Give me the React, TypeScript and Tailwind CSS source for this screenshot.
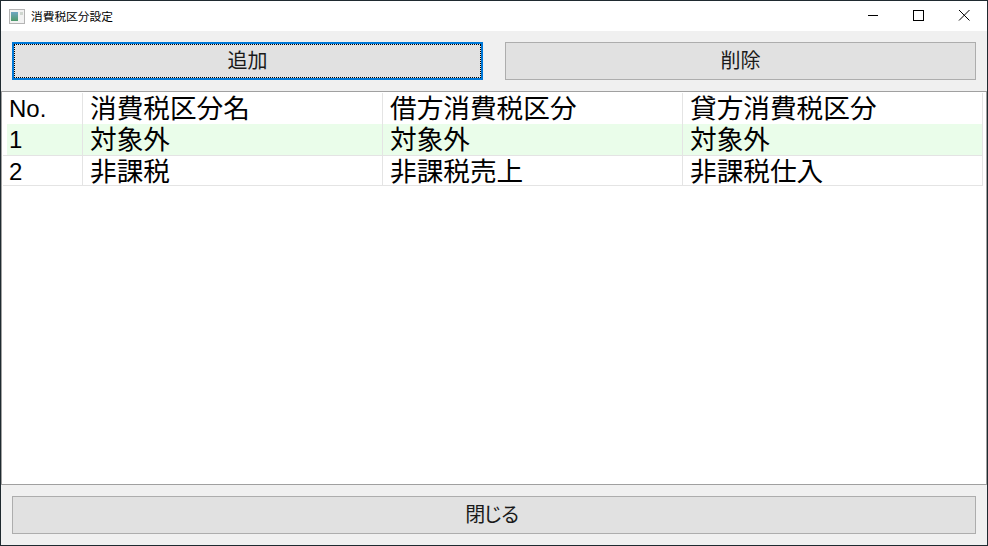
const font = { fontFamily: '"Noto Sans CJK JP", "Liberation Sans", sans-serif' };

const rows = [
  { no: "1", name: "対象外", debit: "対象外", credit: "対象外", h: "h-[32px]" },
  { no: "2", name: "非課税", debit: "非課税売上", credit: "非課税仕入", h: "h-[30px]" },
];

function NoCell({ children }: { children: React.ReactNode }) {
  return (
    <div className="h-full w-[76px] border-r border-[#e4e4e4] pl-[2px] font-['Liberation_Sans'] text-[24px] leading-[31px] whitespace-nowrap">
      {children}
    </div>
  );
}

function Cell({ children }: { children: React.ReactNode }) {
  return (
    <div className="h-full w-[300px] border-r border-[#e4e4e4] pl-[7px] text-[26.67px] leading-[27px] whitespace-nowrap">
      {children}
    </div>
  );
}

function Btn({ label, focused, className }: { label: string; focused?: boolean; className?: string }) {
  if (focused) {
    return (
      <div className={`flex border-2 border-[#0078d7] ${className}`}>
        <div className="flex flex-1 items-center justify-center border border-dotted border-black bg-[#e1e1e1] pb-[3px] text-[20px] text-[#1a1a1a]">{label}</div>
      </div>
    );
  }
  return (
    <div className={`flex items-center justify-center border border-[#adadad] bg-[#e1e1e1] pb-[3px] text-[20px] text-[#1a1a1a] ${className}`}>{label}</div>
  );
}

export default function App() {
  return (
    <div className="flex h-[546px] w-[988px] flex-col overflow-hidden border border-[#1f2a30] bg-white" style={font}>
      <div className="flex h-[30px] shrink-0 items-center bg-white">
        <svg width="16" height="15" viewBox="0 0 16 15" className="ml-[8px]">
          <defs>
            <linearGradient id="ico" x1="0" y1="0" x2="0" y2="1">
              <stop offset="0" stopColor="#6fa6c4" />
              <stop offset="1" stopColor="#4f9a6a" />
            </linearGradient>
          </defs>
          <rect x="0.5" y="0.5" width="15" height="14" fill="#f2f2f2" stroke="#b4b4b4" />
          <rect x="2" y="3" width="7" height="9" fill="url(#ico)" />
          <rect x="11" y="3" width="3" height="3" fill="#cfd6cf" />
        </svg>
        <span className="ml-[6px] text-[11.7px] text-black">消費税区分設定</span>
        <div className="ml-auto flex h-full items-center">
          <svg width="46" height="30" viewBox="0 0 46 30"><path d="M18 14.5h10" stroke="#000" /></svg>
          <svg width="46" height="30" viewBox="0 0 46 30"><rect x="17.5" y="9.5" width="10" height="10" fill="none" stroke="#000" /></svg>
          <svg width="45" height="30" viewBox="0 0 45 30"><path d="M17 9l10.5 10.5M27.5 9l-10.5 10.5" stroke="#000" fill="none" /></svg>
        </div>
      </div>
      <div className="flex h-[60px] shrink-0 items-center gap-[22px] bg-[#f0f0f0] px-[11px]">
        <Btn label="追加" focused className="h-[38px] w-[471px]" />
        <Btn label="削除" className="h-[38px] w-[471px]" />
      </div>
      <div className="flex-1 border border-[#a0a0a0] bg-white pt-[1px] text-black">
        <div className="flex h-[31px] w-[981px] pl-[5px]">
          <NoCell>No.</NoCell>
          <Cell>消費税区分名</Cell>
          <Cell>借方消費税区分</Cell>
          <Cell>貸方消費税区分</Cell>
        </div>
        {rows.map((r, i) => (
          <div key={r.no} className={`ml-[1px] w-[980px] border-b border-[#e4e4e4] pl-[4px] ${r.h}`}>
            <div className={`flex h-full ${i === 0 ? "bg-[#eafdea]" : ""}`}>
              <NoCell>{r.no}</NoCell>
              <Cell>{r.name}</Cell>
              <Cell>{r.debit}</Cell>
              <Cell>{r.credit}</Cell>
            </div>
          </div>
        ))}
      </div>
      <div className="flex h-[60px] shrink-0 items-center bg-[#f0f0f0] px-[11px]">
        <Btn label="閉じる" className="h-[38px] w-[964px] pr-[5px] tracking-[-2.5px]" />
      </div>
    </div>
  );
}
